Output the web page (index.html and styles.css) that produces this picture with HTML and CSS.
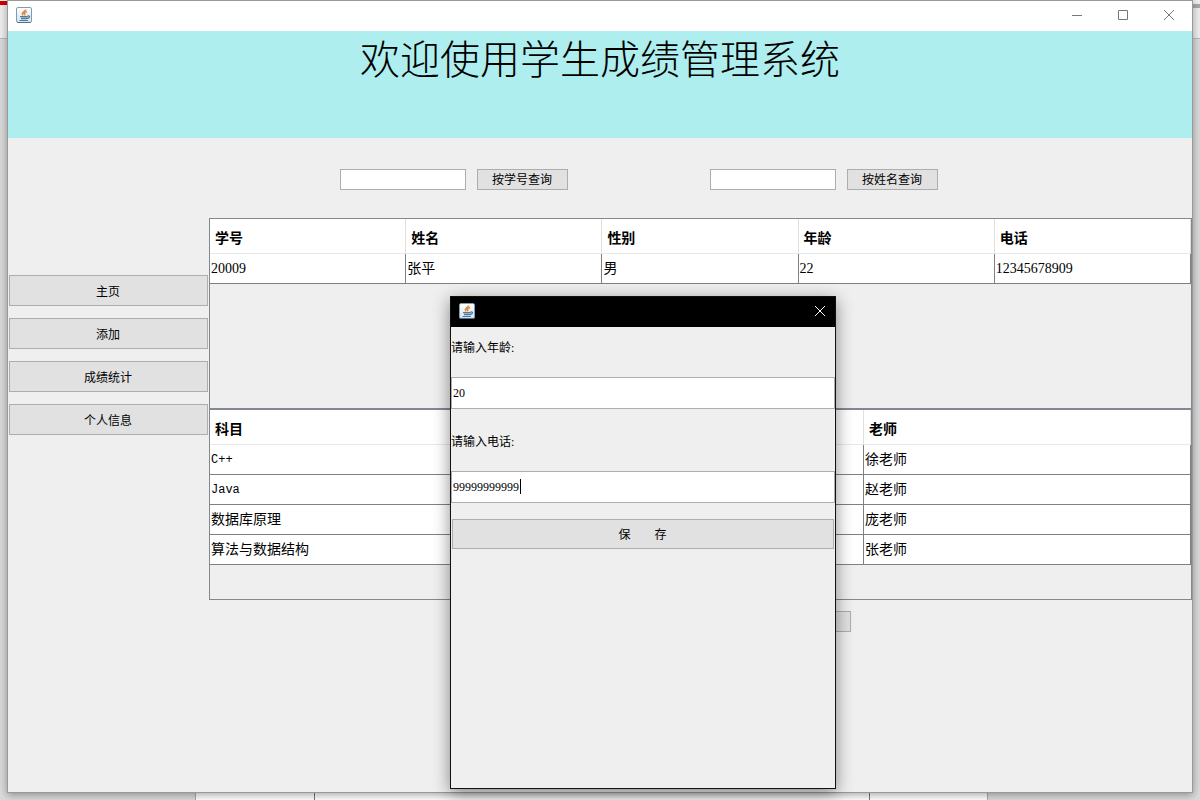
FILE: index.html
```html
<!DOCTYPE html>
<html lang="zh-CN">
<head>
<meta charset="utf-8">
<title>学生成绩管理系统</title>
<link rel="stylesheet" href="styles.css">
</head>
<body>
<svg class="defs" aria-hidden="true">
  <defs>
    <linearGradient id="cup-bg" x1="0" y1="0" x2="0" y2="1">
      <stop offset="0" stop-color="#ffffff"/>
      <stop offset="1" stop-color="#d5e2ea"/>
    </linearGradient>
    <symbol id="java-cup" viewBox="0 0 16 16">
      <rect x=".5" y=".5" width="15" height="15" rx="1.5" fill="url(#cup-bg)" stroke="#7f9bb0"/>
      <path d="M1.500 15.500h13" stroke="#4f708c"/>
      <path d="M9.800 2.500C9.500 4.500 5 5 6.800 8.300M11 4.500C8 5.500 8 6.500 9 8.300" fill="none" stroke="#dc8a3c" stroke-width="1.500"/>
      <path d="M4 9.600h7.500M11.500 9c3-.6 2.600 2.200-.8 2.500M5 11.500h5.700" fill="none" stroke="#52789a" stroke-width="1.300"/>
      <path d="M3.500 13.500h8.500" fill="none" stroke="#52789a"/>
    </symbol>
  </defs>
</svg>

<div class="desktop">
  <div class="desktop-top"><span class="red-tab"></span><span class="grey-tab"></span></div>
  <div class="desktop-bottom"><i></i><i class="sheet"></i><i class="sheet dark"></i><i class="sheet dark"></i><i class="edge"></i></div>
</div>

<div class="window">
  <div class="titlebar">
    <svg class="app-icon"><use href="#java-cup"/></svg>
    <div class="controls">
      <button type="button" aria-label="最小化"><svg width="12" height="12" viewBox="0 0 12 12"><path d="M1 6.500h10"/></svg></button>
      <button type="button" aria-label="最大化"><svg width="12" height="12" viewBox="0 0 12 12"><path d="M1.500 1.500h9v9h-9z"/></svg></button>
      <button type="button" aria-label="关闭"><svg width="12" height="12" viewBox="0 0 12 12"><path d="M1 1l10 10M11 1L1 11"/></svg></button>
    </div>
  </div>

  <header class="banner"><h1>欢迎使用学生成绩管理系统</h1></header>

  <div class="body">
    <nav class="sidebar">
      <button type="button" class="btn">主页</button>
      <button type="button" class="btn">添加</button>
      <button type="button" class="btn">成绩统计</button>
      <button type="button" class="btn">个人信息</button>
    </nav>

    <main class="main">
      <div class="search">
        <form class="search-group">
          <input type="text" class="text" aria-label="学号">
          <button type="button" class="btn">按学号查询</button>
        </form>
        <form class="search-group">
          <input type="text" class="text" aria-label="姓名">
          <button type="button" class="btn">按姓名查询</button>
        </form>
      </div>

      <div class="pane">
        <table class="grid">
          <thead><tr><th>学号</th><th>姓名</th><th>性别</th><th>年龄</th><th>电话</th></tr></thead>
          <tbody><tr><td>20009</td><td>张平</td><td>男</td><td>22</td><td>12345678909</td></tr></tbody>
        </table>
      </div>
      <div class="pane">
        <table class="grid">
          <thead><tr><th>科目</th><th></th><th>老师</th></tr></thead>
          <tbody>
            <tr><td class="latin">C++</td><td></td><td>徐老师</td></tr>
            <tr><td class="latin">Java</td><td></td><td>赵老师</td></tr>
            <tr><td>数据库原理</td><td></td><td>庞老师</td></tr>
            <tr><td>算法与数据结构</td><td></td><td>张老师</td></tr>
          </tbody>
        </table>
      </div>
      <div class="actions"><button type="button" class="btn"></button></div>
    </main>
  </div>
</div>

<div class="dialog" role="dialog">
  <div class="titlebar">
    <svg class="app-icon"><use href="#java-cup"/></svg>
    <div class="controls">
      <button type="button" aria-label="关闭"><svg width="12" height="12" viewBox="0 0 12 12"><path d="M1 1l10 10M11 1L1 11"/></svg></button>
    </div>
  </div>
  <form class="dialog-form">
    <label for="age">请输入年龄:</label>
    <div class="field"><input id="age" type="text" class="text" value="20"></div>
    <label for="phone">请输入电话:</label>
    <div class="field"><input id="phone" type="text" class="text" value="99999999999"><span class="caret"></span></div>
    <button type="button" class="btn save">保&emsp;&emsp;存</button>
  </form>
</div>
</body>
</html>
```
FILE: styles.css
```css
* { box-sizing: border-box; }

body {
  margin: 0;
  height: 100vh;
  overflow: hidden;
  color: #000;
  font: 12px/16px "Liberation Serif", "Noto Sans CJK SC", serif;
}

button, input { font: inherit; color: inherit; }

.defs { position: absolute; width: 0; height: 0; }

/* Desktop behind the windows */
.desktop {
  height: 100vh;
  display: flex;
  flex-direction: column;
  justify-content: space-between;
  background: #dadada;
}
.desktop-top {
  height: 39px;
  padding-top: 1px;
  display: flex;
  justify-content: space-between;
  background: #eee;
  border-bottom: 1px solid #bbb;
}
.red-tab { width: 8px; height: 4px; background: #d00000; }
.grey-tab { width: 8px; height: 4px; margin-top: 3px; background: #aaa; }
.desktop-bottom {
  height: 20px;
  display: grid;
  grid-template-columns: 195fr 119fr 555fr 118fr 213fr;
}
.sheet { background: #fff; border-left: 1px solid #aaa; }
.dark { border-color: #777; }
.edge { border-left: 1px solid #aaa; }

/* Windows */
.window {
  position: absolute;
  inset: 0 7px 7px;
  display: flex;
  flex-direction: column;
  background: #efefef;
  border: 1px solid #999;
  box-shadow: 0 2px 8px rgba(0, 0, 0, .35);
}
.titlebar {
  height: 30px;
  flex: none;
  display: flex;
  justify-content: space-between;
  align-items: center;
  padding: 0 0 2px 8px;
  background: #fff;
}
.app-icon { width: 16px; height: 16px; }
.controls { display: flex; }
.controls button {
  width: 46px;
  height: 28px;
  padding: 0;
  display: grid;
  place-items: center;
  border: 0;
  background: none;
}
.controls svg { fill: none; stroke: #777; }

.banner {
  height: 107px;
  flex: none;
  background: #afeeee;
  text-align: center;
}
.banner h1 {
  margin: 0;
  font-size: 40px;
  font-weight: 300;
  line-height: 60px;
}

.body { flex: 1; display: flex; }
.sidebar {
  width: 201px;
  flex: none;
  padding: 137px 1px 0;
  display: flex;
  flex-direction: column;
  gap: 12px;
}
.main { flex: 1; min-width: 0; }

.btn {
  padding: 2px 1px 0 0;
  background: #e1e1e1;
  border: 1px solid #adadad;
}
.sidebar .btn { height: 31px; }
.text {
  background: #fff;
  border: 1px solid #abadb3;
  border-radius: 0;
  padding: 0 2px;
  outline: 0;
}

.search {
  height: 80px;
  padding: 31px 0 0 131px;
  display: flex;
  align-items: flex-start;
  gap: 142px;
}
.search-group { display: flex; gap: 11px; }
.search-group .text { width: 126px; height: 21px; }
.search-group .btn { width: 91px; height: 21px; line-height: 17px; }

/* Tables */
.pane {
  height: 191px;
  border: 1px solid #828790;
}
.grid {
  width: 100%;
  table-layout: fixed;
  border-collapse: separate;
  border-spacing: 0;
  background: #fff;
  font-size: 14px;
}
.grid th {
  height: 35px;
  padding: 6px 5px 0;
  text-align: left;
  border-right: 1px solid #e0e0e0;
  border-bottom: 1px solid #e8e8e8;
}
.grid td {
  height: 30px;
  padding: 0 1px;
  border-right: 1px solid #808080;
  border-bottom: 1px solid #808080;
}
.grid .latin { font-family: "Liberation Mono", monospace; font-size: 12px; }

.actions { padding-top: 11px; text-align: center; }
.actions .btn { width: 300px; height: 21px; }

/* Dialog */
.dialog {
  position: absolute;
  left: 450px;
  top: 296px;
  width: 386px;
  height: 493px;
  background: #efefef;
  border: 1px solid #111;
  box-shadow: 0 4px 16px rgba(0, 0, 0, .45);
}
.dialog .titlebar { background: #000; }
.dialog .controls button { width: 30px; }
.dialog .controls svg { stroke: #fff; }
.dialog-form { display: flex; flex-direction: column; }
.dialog-form label { line-height: 42px; margin-bottom: 8px; }
.field { position: relative; margin-bottom: 12px; }
.field .text { display: block; width: 100%; height: 32px; padding: 0 1px; }
.caret {
  position: absolute;
  left: 69px;
  top: 8px;
  width: 1px;
  height: 15px;
  background: #000;
}
.save { height: 30px; margin: 4px 1px 0; }
```
